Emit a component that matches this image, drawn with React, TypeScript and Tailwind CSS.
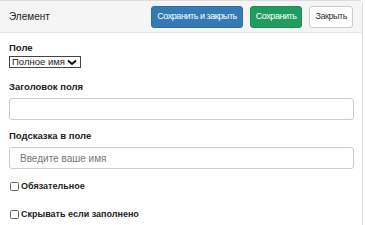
export default function App() {
  return (
    <div className="h-[225px] w-[365px] overflow-hidden bg-white font-['Liberation_Sans',Arial,sans-serif] text-[#333]">
      <div className="h-full w-[363px] rounded-tr-[4px] border-r border-t border-[#ddd]">
        <div className="flex h-[32px] items-center justify-between border-b border-[#e5e5e5] bg-[#f5f5f5] px-[9px]">
          <span className="text-[10px] text-[#222]">Элемент</span>
          <div className="flex gap-[7px]">
            <button className="h-[22px] rounded-[3px] border border-[#2e6da4] bg-[#337ab7] px-[5px] text-[9px] tracking-[-0.45px] text-white">
              Сохранить и закрыть
            </button>
            <button className="h-[22px] rounded-[3px] border border-[#1b8f55] bg-[#1f9d60] px-[5px] text-[9px] tracking-[-0.45px] text-white">
              Сохранить
            </button>
            <button className="h-[22px] rounded-[3px] border border-[#ccc] bg-white px-[5px] text-[9px] tracking-[-0.45px] text-[#333]">
              Закрыть
            </button>
          </div>
        </div>
        <div className="flex flex-col px-[9px] pt-[9px]">
          <label className="text-[9.5px] font-bold leading-[12px] text-[#222]">Поле</label>
          <div className="mt-[2px] flex h-[12px] w-[72px] items-center justify-between border border-[#444] pl-[2px] pr-[3px]">
            <span className="text-[9.5px] leading-none text-[#222]">Полное имя</span>
            <svg width="10" height="7" viewBox="0 0 10 7">
              <path d="M1 1.5 L5 5 L9 1.5" fill="none" stroke="#111" strokeWidth="2" />
            </svg>
          </div>
          <label className="mt-[13px] text-[9.5px] font-bold leading-[12px] text-[#222]">Заголовок поля</label>
          <input className="mt-[5px] h-[22px] w-[345px] rounded-[3px] border border-[#ccc] px-[9px] text-[10px]" />
          <label className="mt-[10px] text-[9.5px] font-bold leading-[12px] text-[#222]">Подсказка в поле</label>
          <input
            className="mt-[5px] h-[22px] w-[345px] rounded-[3px] border border-[#ccc] px-[10px] text-[10px] placeholder:text-[#777]"
            placeholder="Введите ваше имя"
          />
          <label className="mt-[11px] flex items-center gap-[2px] text-[9px] font-bold leading-[12px] text-[#222]">
            <span className="ml-px h-[9px] w-[9px] rounded-[1.5px] border border-[#666] bg-white" />
            Обязательное
          </label>
          <label className="mt-[16px] flex items-center gap-[2px] text-[9px] font-bold leading-[12px] text-[#222]">
            <span className="ml-px h-[9px] w-[9px] rounded-[1.5px] border border-[#666] bg-white" />
            Скрывать если заполнено
          </label>
        </div>
      </div>
    </div>
  )
}
